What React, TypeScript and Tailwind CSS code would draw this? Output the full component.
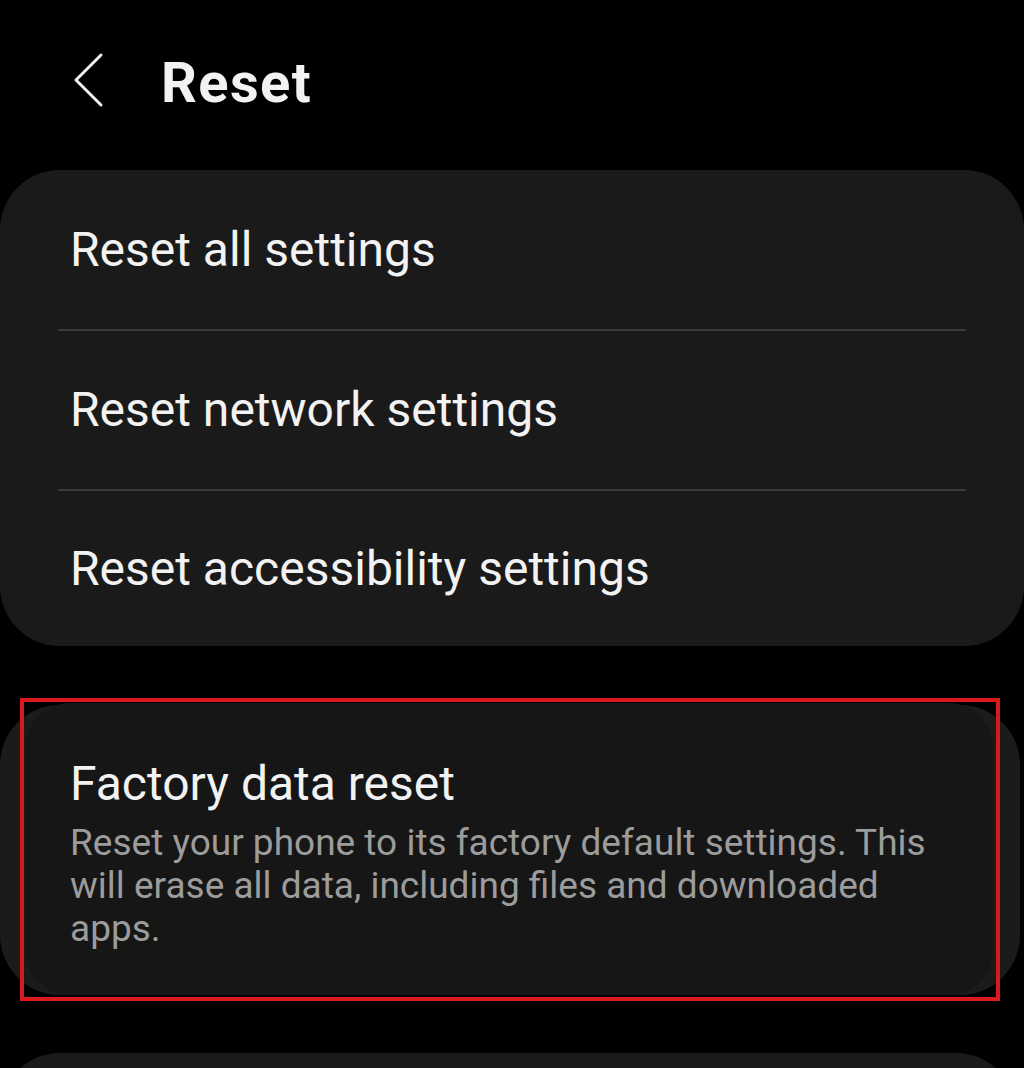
import React from "react";

const rows = ["Reset all settings", "Reset network settings", "Reset accessibility settings"];

function BackChevron() {
  return (
    <svg width="34" height="56" viewBox="0 0 34 56" fill="none" className="mt-[1px] ml-[72px] shrink-0">
      <path d="M29 3 L4 28 L29 53" stroke="#f2f2f2" strokeWidth="3" strokeLinecap="round" strokeLinejoin="round" />
    </svg>
  );
}

export default function App() {
  return (
    <div className="w-[1024px] h-[1068px] overflow-hidden bg-black font-['Roboto','Liberation_Sans',sans-serif] text-[#f2f2f2]">
      {/* header */}
      <div className="flex h-[170px] items-start pt-[51px]">
        <BackChevron />
        <h1 className="ml-[55px] text-[56px] font-bold leading-[64px] tracking-[1.4px]">Reset</h1>
      </div>

      {/* settings group */}
      <div className="rounded-[60px] bg-[#1a1a1a]">
        {rows.map((label, i) => (
          <React.Fragment key={label}>
            {i > 0 && <div className="mx-[58px] h-[2px] bg-[#3a3a3a]" />}
            <div className={`flex items-center pl-[70px] ${i === 0 ? "h-[159px]" : i === 1 ? "h-[158px]" : "h-[155px]"}`}>
              <span className="text-[48px] leading-[56px]">{label}</span>
            </div>
          </React.Fragment>
        ))}
      </div>

      {/* factory data reset, highlighted */}
      <div className="relative mt-[52px] h-[303px]">
        <div className="absolute top-[7px] bottom-[6px] left-0 right-[4px] rounded-[60px] bg-[#1b1b1b]" />
        <div className="relative ml-[20px] h-full w-[980px] border-4 border-[#d9191c] pt-[1px] pl-[1px] pr-[3px] pb-[2px]">
          <div className="h-full rounded-[45px] bg-[#161616] pl-[45px] pt-[53px]">
            <div className="text-[48px] leading-[56px]">Factory data reset</div>
            <p className="mt-[9px] max-w-[880px] text-[37px] leading-[43px] text-[#9c9c9c]">
              Reset your phone to its factory default settings. This will erase all data, including files and downloaded apps.
            </p>
          </div>
        </div>
      </div>

      {/* next group (cut off) */}
      <div className="mt-[52px] mr-[8px] h-[200px] rounded-[60px] bg-[#1a1a1a]" />
    </div>
  );
}
